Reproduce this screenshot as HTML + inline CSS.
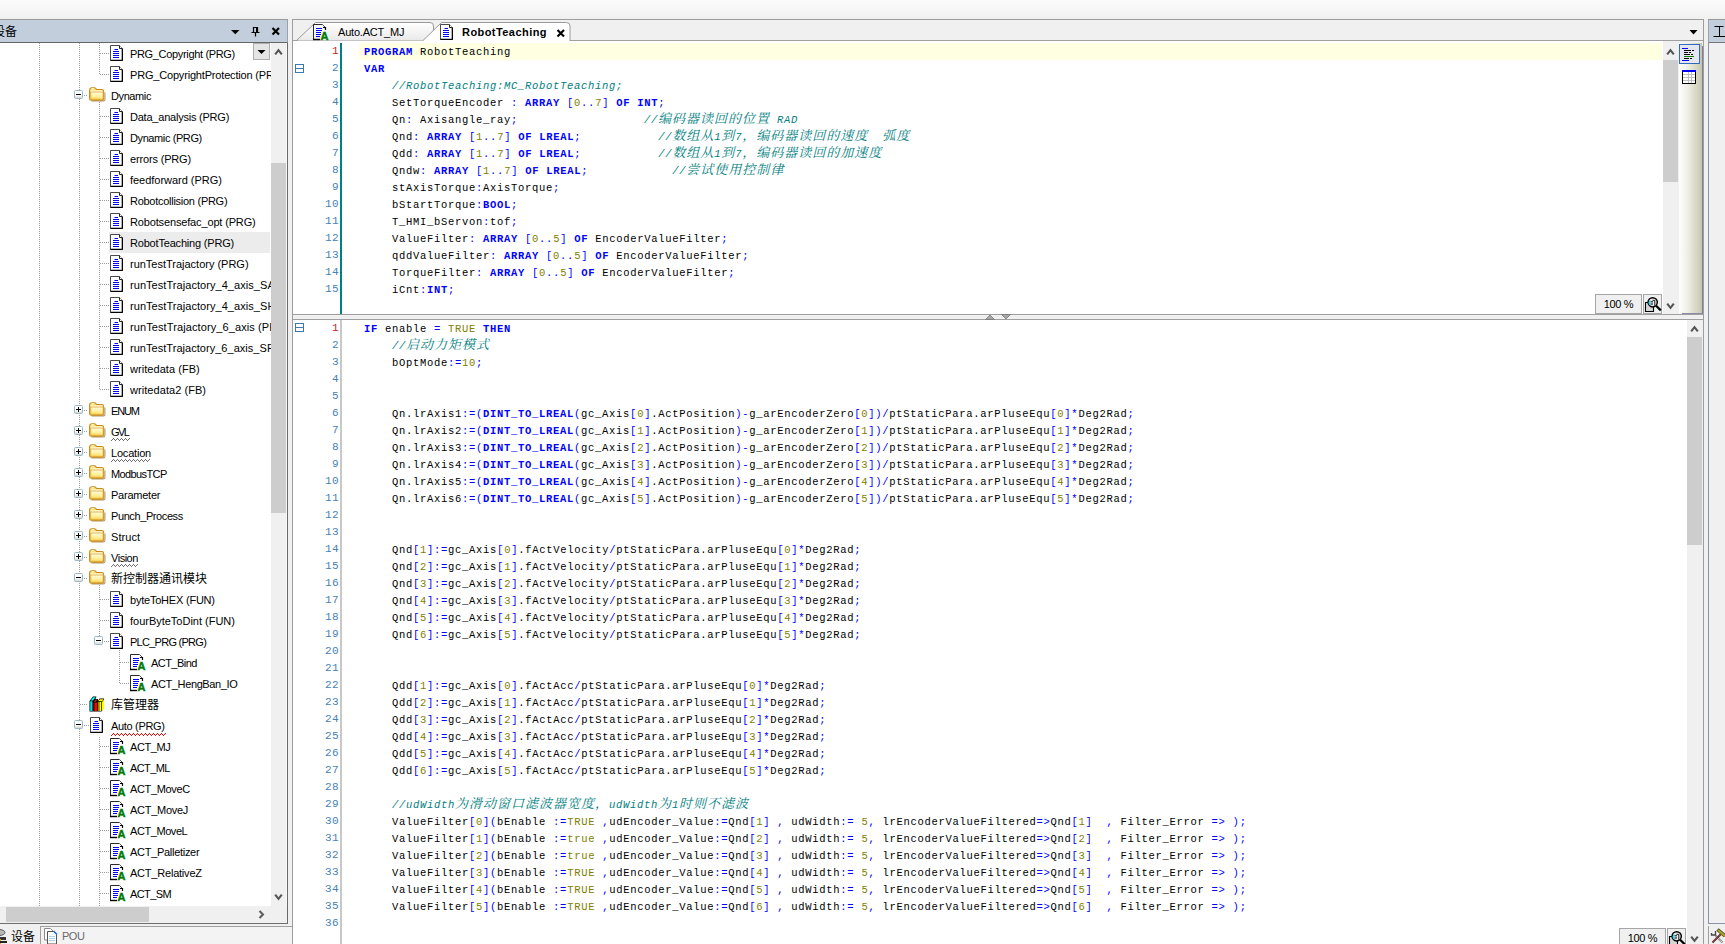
<!DOCTYPE html>
<html lang="zh"><head><meta charset="utf-8"><title>RobotTeaching</title>
<style>
*{box-sizing:border-box;margin:0;padding:0}
html,body{width:1725px;height:944px;overflow:hidden}
body{position:relative;background:#f0f0f0;font-family:"Liberation Sans","Noto Sans CJK SC",sans-serif;font-size:11px;color:#000}
.abs,.ic,.vd,.hd,.sel,.exp,.tl{position:absolute}
.ic{overflow:visible}
.topgrad{left:0;top:0;width:1725px;height:19px;background:linear-gradient(#fbfbfb,#f7f7f7 50%,#f0f0f0)}
.lhead{left:0;top:19px;width:288px;height:24px;background:#c2cedc;border-top:1px solid #999;border-bottom:1px solid #666;border-right:1px solid #9aa3ad}
.tree{left:0;top:43px;width:271px;height:863px;background:#fff;overflow:hidden}
.vd{width:1px;background-image:linear-gradient(#9c9c9c 50%,transparent 50%);background-size:1px 2px}
.hd{height:1px;background-image:linear-gradient(90deg,#9c9c9c 50%,transparent 50%);background-size:2px 1px}
.sel{background:#ececec}
.exp{width:9px;height:9px;border:1px solid #98b9c0;background:linear-gradient(#fff,#fff 55%,#d8d8d8);border-radius:1.5px}
.exp i{position:absolute;left:1px;top:3px;width:5px;height:1px;background:#000}
.exp b{position:absolute;left:3px;top:1px;width:1px;height:5px;background:#000}
.tl{height:21px;line-height:21px;white-space:nowrap;font-size:11px}
.tl.cj{font-size:12px;letter-spacing:0}
/* code */
.code{position:absolute;left:293px;width:1369px;font-family:"Liberation Mono","Noto Sans CJK SC",monospace;font-size:10.5px;letter-spacing:0.699px}
.cl{height:17px;line-height:17px;position:relative}
.ln{position:absolute;left:0;top:-1px;width:46px;text-align:right;font-size:11px;letter-spacing:.4px;color:#4682b4}
.ln.cur{color:#c8242c}
.ct{position:absolute;left:71px;top:0;white-space:pre}
.code b{color:#0000ff;font-weight:bold}
.code .n{color:#808000}
.code .o{color:#0000ff}
.code i{color:#008080;font-style:italic}
.code .z{letter-spacing:1px;font-size:13px;line-height:0;font-family:"Noto Serif CJK SC","Noto Sans CJK SC",serif}
.fb{width:9px;height:9px;border:1px solid #3d7ab5;background:#fff}
.fb:after{content:"";position:absolute;left:0;top:3px;width:7px;height:1px;background:#3d7ab5}
.zb{height:20px;background:#f0f0f0;border:1px solid #a6a6a6}
</style></head><body>

<svg width="0" height="0" style="position:absolute">
<defs>
<linearGradient id="gf" x1="0" y1="0" x2="0" y2="1"><stop offset="0" stop-color="#fffde0"/><stop offset=".55" stop-color="#fff0a0"/><stop offset="1" stop-color="#ffd95a"/></linearGradient>
<linearGradient id="gx" x1="0" y1="0" x2="0" y2="1"><stop offset="0" stop-color="#ffffff"/><stop offset="1" stop-color="#d6d6d6"/></linearGradient>
<symbol id="doc" viewBox="0 0 14 17">
  <path d="M.5 .5h9l3 3v12h-12z" fill="#fff" stroke="#4a4a4a" stroke-width="1"/>
  <path d="M9.500 .5v3h3" fill="#fff" stroke="#222" stroke-width="1"/>
  <path d="M12.350 4v11.500M.5 15.350h12" stroke="#000" stroke-width="1.300" fill="none"/>
  <path d="M4.500 4.500h3.500M3 6.500h6M3 8.500h6M3 10.500h6M3 12.500h6" stroke="#0000ff" stroke-width="1" fill="none"/>
</symbol>
<symbol id="act" viewBox="0 0 16 17">
  <path d="M.5 16V.5h9" fill="none" stroke="#2a2a2a" stroke-width="1"/>
  <path d="M9.500 .5l3 3" fill="none" stroke="#555" stroke-width="1"/>
  <path d="M10 3.500h2.500v2.500" fill="none" stroke="#000" stroke-width="1.200"/>
  <path d="M0 15.500h7" stroke="#000" stroke-width="1.400" fill="none"/>
  <path d="M3 4.500h6M3 6.500h6M3 8.500h5M3 10.500h5M3 12.500h4" stroke="#0000ff" stroke-width="1" fill="none"/>
  <text x="7.400" y="16" font-family="Liberation Sans, sans-serif" font-weight="bold" font-size="11" fill="#007a00" stroke="#007a00" stroke-width=".4">A</text>
</symbol>
<symbol id="fold" viewBox="0 0 17 15">
  <path d="M2.500 13.900h12q1.400 0 1.400-1.400v-7" fill="none" stroke="#7a5410" stroke-width="1.100" opacity=".6"/>
  <path d="M.6 2.900q0-1.900 1.900-2.200h2.700q1.100 0 1.700.9l.6.900h5.400q1.700 0 1.700 1.700v7.200q0 1.700-1.700 1.700h-10.600q-1.700 0-1.700-1.700z" fill="#ffe27a" stroke="#c98a1c" stroke-width="1.100"/>
  <path d="M2 3.400h11.500v2h-11.500z" fill="#fffbe0"/>
  <path d="M1.700 5h12.400v6.400q0 1-1 1h-10.400q-1 0-1-1z" fill="url(#gf)" stroke="#dba336" stroke-width=".8"/>
  <path d="M2.500 1.700h2.600" stroke="#fff8d0" stroke-width="1" fill="none"/>
  <path d="M12.600 6v5.500" stroke="#fff6c0" stroke-width=".8" fill="none"/>
</symbol>
<symbol id="lib" viewBox="0 0 16 16">
  <path d="M.5 5l3.500-4.500h3.500l-1 2.500h2.500v2l1.500-2.500h4.500v9.500l-2.500 3.500h-12z" fill="#000"/>
  <path d="M1.200 5.300h1.800v9.700h-1.800z" fill="#00e5e5"/><path d="M3 5.300h.8v9.700h-.8z" fill="#007a7a"/>
  <path d="M1.600 4.600l2.600-3.400h2.400l-2.600 3.400z" fill="#00ffff"/>
  <path d="M4.400 6.500h1.600v8.500h-1.600z" fill="#a00000"/><path d="M6 6.500h2.200v8.500h-2.200z" fill="#ff0000"/>
  <path d="M5 5.800l1.800-2.300h1.400l-1.600 2.300z" fill="#ff2020"/>
  <path d="M8.900 6h1.600v9h-1.600z" fill="#8a8a00"/><path d="M10.500 6h1.800v9h-1.800z" fill="#ffff00"/>
  <path d="M9.400 5.300l1.500-2.100h3.700l-1.600 2.100z" fill="#ffff00"/>
  <path d="M13 6l2-2.500v8.700l-2 2.700z" fill="#ffff00"/>
</symbol>
<symbol id="mag" viewBox="0 0 18 18">
  <path d="M1.500 7.500h8v9h-8z" fill="#d6d6d6" stroke="#000" stroke-width="1.100"/>
  <circle cx="8.700" cy="7.300" r="4.600" fill="#ededed" stroke="#000" stroke-width="1.500"/>
  <path d="M8.500 5.300h2.300v5.500" stroke="#000" stroke-width=".9" fill="none"/>
  <path d="M6.400 6.800h2.600M6.400 9h2.600" stroke="#000" stroke-width="1"/>
  <path d="M6.200 5.800q-2.200 1.900 0 4" stroke="#00e0ff" stroke-width="1.200" fill="none"/>
  <path d="M12.100 10.700l4.700 4.700" stroke="#000" stroke-width="2.200"/>
</symbol>
<pattern id="pwr" width="4" height="3" patternUnits="userSpaceOnUse"><path d="M0 2h1v1h-1zM1 1h1v1h-1zM2 0h1v1h-1zM3 1h1v1h-1z" fill="#ff0000"/></pattern>
<pattern id="pwg" width="4" height="3" patternUnits="userSpaceOnUse"><path d="M0 2h1v1h-1zM1 1h1v1h-1zM2 0h1v1h-1zM3 1h1v1h-1z" fill="#6e6e6e"/></pattern>
</defs>
</svg>

<div class="abs topgrad"></div>
<div class="abs lhead"></div>
<div class="abs" style="left:-7px;top:23px;font-size:12px;line-height:18px">设备</div>
<svg class="ic" style="left:228px;top:25px" width="56" height="14" viewBox="0 0 56 14"><path d="M3 5h8.500l-4.250 4.250z" fill="#000"/><path d="M25.500 2.500h4v5h-4zM23.500 7.500h8M27.500 8v3.500" stroke="#000" stroke-width="1.200" fill="none"/><path d="M28.700 2.500v5" stroke="#000" stroke-width="1.400"/><path d="M44.500 3l6.500 6.500M51 3l-6.500 6.500" stroke="#000" stroke-width="2.200"/></svg>
<div class="abs tree">
<div style="position:absolute;left:0;top:-43px;width:271px;height:906px">
<div class="vd" style="left:39px;top:43px;height:863px"></div>
<div class="vd" style="left:79px;top:43px;height:863px"></div>
<div class="vd" style="left:99px;top:43px;height:31px"></div>
<div class="vd" style="left:99px;top:102px;height:287px"></div>
<div class="vd" style="left:99px;top:585px;height:51px"></div>
<div class="vd" style="left:119px;top:650px;height:33px"></div>
<div class="vd" style="left:99px;top:737px;height:169px"></div>
<div class="hd" style="left:100px;top:53px;width:9px"></div>
<svg class="ic" style="left:110px;top:45px" width="14" height="17"><use href="#doc"/></svg>
<div class="tl" style="left:130px;top:44px;letter-spacing:-0.335px">PRG_Copyright (PRG)</div>
<div class="hd" style="left:100px;top:74px;width:9px"></div>
<svg class="ic" style="left:110px;top:66px" width="14" height="17"><use href="#doc"/></svg>
<div class="tl" style="left:130px;top:65px;letter-spacing:-0.181px">PRG_CopyrightProtection (PRG)</div>
<div class="hd" style="left:84px;top:95px;width:4px"></div>
<div class="exp" style="left:74px;top:90px"><i></i></div>
<svg class="ic" style="left:89px;top:87px" width="17" height="15"><use href="#fold"/></svg>
<div class="tl" style="left:111px;top:86px;letter-spacing:-0.400px">Dynamic</div>
<div class="hd" style="left:100px;top:116px;width:9px"></div>
<svg class="ic" style="left:110px;top:108px" width="14" height="17"><use href="#doc"/></svg>
<div class="tl" style="left:130px;top:107px;letter-spacing:-0.223px">Data_analysis (PRG)</div>
<div class="hd" style="left:100px;top:137px;width:9px"></div>
<svg class="ic" style="left:110px;top:129px" width="14" height="17"><use href="#doc"/></svg>
<div class="tl" style="left:130px;top:128px;letter-spacing:-0.401px">Dynamic (PRG)</div>
<div class="hd" style="left:100px;top:158px;width:9px"></div>
<svg class="ic" style="left:110px;top:150px" width="14" height="17"><use href="#doc"/></svg>
<div class="tl" style="left:130px;top:149px;letter-spacing:-0.163px">errors (PRG)</div>
<div class="hd" style="left:100px;top:179px;width:9px"></div>
<svg class="ic" style="left:110px;top:171px" width="14" height="17"><use href="#doc"/></svg>
<div class="tl" style="left:130px;top:170px;letter-spacing:-0.030px">feedforward (PRG)</div>
<div class="hd" style="left:100px;top:200px;width:9px"></div>
<svg class="ic" style="left:110px;top:192px" width="14" height="17"><use href="#doc"/></svg>
<div class="tl" style="left:130px;top:191px;letter-spacing:-0.270px">Robotcollision (PRG)</div>
<div class="hd" style="left:100px;top:221px;width:9px"></div>
<svg class="ic" style="left:110px;top:213px" width="14" height="17"><use href="#doc"/></svg>
<div class="tl" style="left:130px;top:212px;letter-spacing:-0.149px">Robotsensefac_opt (PRG)</div>
<div class="sel" style="left:109px;top:232px;width:161px;height:21px"></div>
<div class="hd" style="left:100px;top:242px;width:9px"></div>
<svg class="ic" style="left:110px;top:234px" width="14" height="17"><use href="#doc"/></svg>
<div class="tl" style="left:130px;top:233px;letter-spacing:-0.185px">RobotTeaching (PRG)</div>
<div class="hd" style="left:100px;top:263px;width:9px"></div>
<svg class="ic" style="left:110px;top:255px" width="14" height="17"><use href="#doc"/></svg>
<div class="tl" style="left:130px;top:254px;letter-spacing:-0.009px">runTestTrajactory (PRG)</div>
<div class="hd" style="left:100px;top:284px;width:9px"></div>
<svg class="ic" style="left:110px;top:276px" width="14" height="17"><use href="#doc"/></svg>
<div class="tl" style="left:130px;top:275px;letter-spacing:0.056px">runTestTrajactory_4_axis_SA (PRG)</div>
<div class="hd" style="left:100px;top:305px;width:9px"></div>
<svg class="ic" style="left:110px;top:297px" width="14" height="17"><use href="#doc"/></svg>
<div class="tl" style="left:130px;top:296px;letter-spacing:0.056px">runTestTrajactory_4_axis_SH (PRG)</div>
<div class="hd" style="left:100px;top:326px;width:9px"></div>
<svg class="ic" style="left:110px;top:318px" width="14" height="17"><use href="#doc"/></svg>
<div class="tl" style="left:130px;top:317px;letter-spacing:0.101px">runTestTrajactory_6_axis (PRG)</div>
<div class="hd" style="left:100px;top:347px;width:9px"></div>
<svg class="ic" style="left:110px;top:339px" width="14" height="17"><use href="#doc"/></svg>
<div class="tl" style="left:130px;top:338px;letter-spacing:0.037px">runTestTrajactory_6_axis_SP (PRG)</div>
<div class="hd" style="left:100px;top:368px;width:9px"></div>
<svg class="ic" style="left:110px;top:360px" width="14" height="17"><use href="#doc"/></svg>
<div class="tl" style="left:130px;top:359px;letter-spacing:0.052px">writedata (FB)</div>
<div class="hd" style="left:100px;top:389px;width:9px"></div>
<svg class="ic" style="left:110px;top:381px" width="14" height="17"><use href="#doc"/></svg>
<div class="tl" style="left:130px;top:380px;letter-spacing:0.060px">writedata2 (FB)</div>
<div class="hd" style="left:84px;top:410px;width:4px"></div>
<div class="exp" style="left:74px;top:405px"><i></i><b></b></div>
<svg class="ic" style="left:89px;top:402px" width="17" height="15"><use href="#fold"/></svg>
<div class="tl" style="left:111px;top:401px;letter-spacing:-1.123px">ENUM</div>
<div class="hd" style="left:84px;top:431px;width:4px"></div>
<div class="exp" style="left:74px;top:426px"><i></i><b></b></div>
<svg class="ic" style="left:89px;top:423px" width="17" height="15"><use href="#fold"/></svg>
<div class="tl" style="left:111px;top:422px;letter-spacing:-1.539px">GVL</div>
<svg class="ic" style="left:111px;top:438px" width="19" height="3" shape-rendering="crispEdges"><rect width="19" height="3" fill="url(#pwg)"/></svg>
<div class="hd" style="left:84px;top:452px;width:4px"></div>
<div class="exp" style="left:74px;top:447px"><i></i><b></b></div>
<svg class="ic" style="left:89px;top:444px" width="17" height="15"><use href="#fold"/></svg>
<div class="tl" style="left:111px;top:443px;letter-spacing:-0.199px">Location</div>
<svg class="ic" style="left:111px;top:459px" width="39" height="3" shape-rendering="crispEdges"><rect width="39" height="3" fill="url(#pwg)"/></svg>
<div class="hd" style="left:84px;top:473px;width:4px"></div>
<div class="exp" style="left:74px;top:468px"><i></i><b></b></div>
<svg class="ic" style="left:89px;top:465px" width="17" height="15"><use href="#fold"/></svg>
<div class="tl" style="left:111px;top:464px;letter-spacing:-0.605px">ModbusTCP</div>
<div class="hd" style="left:84px;top:494px;width:4px"></div>
<div class="exp" style="left:74px;top:489px"><i></i><b></b></div>
<svg class="ic" style="left:89px;top:486px" width="17" height="15"><use href="#fold"/></svg>
<div class="tl" style="left:111px;top:485px;letter-spacing:-0.240px">Parameter</div>
<div class="hd" style="left:84px;top:515px;width:4px"></div>
<div class="exp" style="left:74px;top:510px"><i></i><b></b></div>
<svg class="ic" style="left:89px;top:507px" width="17" height="15"><use href="#fold"/></svg>
<div class="tl" style="left:111px;top:506px;letter-spacing:-0.404px">Punch_Process</div>
<div class="hd" style="left:84px;top:536px;width:4px"></div>
<div class="exp" style="left:74px;top:531px"><i></i><b></b></div>
<svg class="ic" style="left:89px;top:528px" width="17" height="15"><use href="#fold"/></svg>
<div class="tl" style="left:111px;top:527px;letter-spacing:0.078px">Struct</div>
<div class="hd" style="left:84px;top:557px;width:4px"></div>
<div class="exp" style="left:74px;top:552px"><i></i><b></b></div>
<svg class="ic" style="left:89px;top:549px" width="17" height="15"><use href="#fold"/></svg>
<div class="tl" style="left:111px;top:548px;letter-spacing:-0.478px">Vision</div>
<svg class="ic" style="left:111px;top:564px" width="27" height="3" shape-rendering="crispEdges"><rect width="27" height="3" fill="url(#pwg)"/></svg>
<div class="hd" style="left:84px;top:578px;width:4px"></div>
<div class="exp" style="left:74px;top:573px"><i></i></div>
<svg class="ic" style="left:89px;top:570px" width="17" height="15"><use href="#fold"/></svg>
<div class="tl cj" style="left:111px;top:569px">新控制器通讯模块</div>
<div class="hd" style="left:100px;top:599px;width:9px"></div>
<svg class="ic" style="left:110px;top:591px" width="14" height="17"><use href="#doc"/></svg>
<div class="tl" style="left:130px;top:590px;letter-spacing:-0.215px">byteToHEX (FUN)</div>
<div class="hd" style="left:100px;top:620px;width:9px"></div>
<svg class="ic" style="left:110px;top:612px" width="14" height="17"><use href="#doc"/></svg>
<div class="tl" style="left:130px;top:611px;letter-spacing:-0.012px">fourByteToDint (FUN)</div>
<div class="hd" style="left:104px;top:641px;width:5px"></div>
<div class="exp" style="left:94px;top:636px"><i></i></div>
<svg class="ic" style="left:110px;top:633px" width="14" height="17"><use href="#doc"/></svg>
<div class="tl" style="left:130px;top:632px;letter-spacing:-0.729px">PLC_PRG (PRG)</div>
<div class="hd" style="left:120px;top:662px;width:9px"></div>
<svg class="ic" style="left:130px;top:654px" width="16" height="17"><use href="#act"/></svg>
<div class="tl" style="left:151px;top:653px;letter-spacing:-0.543px">ACT_Bind</div>
<div class="hd" style="left:120px;top:683px;width:9px"></div>
<svg class="ic" style="left:130px;top:675px" width="16" height="17"><use href="#act"/></svg>
<div class="tl" style="left:151px;top:674px;letter-spacing:-0.380px">ACT_HengBan_IO</div>
<div class="hd" style="left:80px;top:704px;width:8px"></div>
<svg class="ic" style="left:89px;top:696px" width="16" height="16"><use href="#lib"/></svg>
<div class="tl cj" style="left:111px;top:695px">库管理器</div>
<div class="hd" style="left:84px;top:725px;width:5px"></div>
<div class="exp" style="left:74px;top:720px"><i></i></div>
<svg class="ic" style="left:90px;top:717px" width="14" height="17"><use href="#doc"/></svg>
<div class="tl" style="left:111px;top:716px;letter-spacing:-0.316px">Auto (PRG)</div>
<svg class="ic" style="left:111px;top:733px" width="55" height="3" shape-rendering="crispEdges"><rect width="55" height="3" fill="url(#pwr)"/></svg>
<div class="hd" style="left:100px;top:746px;width:9px"></div>
<svg class="ic" style="left:110px;top:738px" width="16" height="17"><use href="#act"/></svg>
<div class="tl" style="left:130px;top:737px;letter-spacing:-0.430px">ACT_MJ</div>
<div class="hd" style="left:100px;top:767px;width:9px"></div>
<svg class="ic" style="left:110px;top:759px" width="16" height="17"><use href="#act"/></svg>
<div class="tl" style="left:130px;top:758px;letter-spacing:-0.618px">ACT_ML</div>
<div class="hd" style="left:100px;top:788px;width:9px"></div>
<svg class="ic" style="left:110px;top:780px" width="16" height="17"><use href="#act"/></svg>
<div class="tl" style="left:130px;top:779px;letter-spacing:-0.352px">ACT_MoveC</div>
<div class="hd" style="left:100px;top:809px;width:9px"></div>
<svg class="ic" style="left:110px;top:801px" width="16" height="17"><use href="#act"/></svg>
<div class="tl" style="left:130px;top:800px;letter-spacing:-0.281px">ACT_MoveJ</div>
<div class="hd" style="left:100px;top:830px;width:9px"></div>
<svg class="ic" style="left:110px;top:822px" width="16" height="17"><use href="#act"/></svg>
<div class="tl" style="left:130px;top:821px;letter-spacing:-0.427px">ACT_MoveL</div>
<div class="hd" style="left:100px;top:851px;width:9px"></div>
<svg class="ic" style="left:110px;top:843px" width="16" height="17"><use href="#act"/></svg>
<div class="tl" style="left:130px;top:842px;letter-spacing:-0.290px">ACT_Palletizer</div>
<div class="hd" style="left:100px;top:872px;width:9px"></div>
<svg class="ic" style="left:110px;top:864px" width="16" height="17"><use href="#act"/></svg>
<div class="tl" style="left:130px;top:863px;letter-spacing:-0.214px">ACT_RelativeZ</div>
<div class="hd" style="left:100px;top:893px;width:9px"></div>
<svg class="ic" style="left:110px;top:885px" width="16" height="17"><use href="#act"/></svg>
<div class="tl" style="left:130px;top:884px;letter-spacing:-0.604px">ACT_SM</div>
</div></div>
<div class="abs" style="left:253px;top:43px;width:17px;height:17px;background:#e5e5e5;border:1px solid #adadad"></div>
<svg class="ic" style="left:257px;top:50px" width="9" height="5"><path d="M.5 0h8L4.500 4z" fill="#000"/></svg>
<div class="abs" style="left:271px;top:43px;width:16px;height:863px;background:#f0f0f0;border-right:1px solid #f8f8f8"></div>
<div class="abs" style="left:271px;top:163px;width:15px;height:350px;background:#cdcdcd"></div>
<svg class="ic" style="left:274px;top:48px" width="9" height="7"><path d="M1.200 6.400l3.300-4.200 3.300 4.200" stroke="#555" stroke-width="2.100" fill="none"/></svg>
<svg class="ic" style="left:274px;top:894px" width="9" height="7"><path d="M1.200 .6l3.300 4.200 3.300-4.200" stroke="#555" stroke-width="2.100" fill="none"/></svg>
<div class="abs" style="left:0;top:906px;width:287px;height:17px;background:#f0f0f0"></div>
<div class="abs" style="left:6px;top:907px;width:143px;height:15px;background:#cdcdcd"></div>
<svg class="ic" style="left:258px;top:910px" width="7" height="9"><path d="M1.500 1l3.500 3.500L1.500 8" stroke="#5a5a5a" stroke-width="2" fill="none"/></svg>
<div class="abs" style="left:287px;top:43px;width:1px;height:881px;background:#6a6a6a"></div>
<div class="abs" style="left:0;top:923px;width:288px;height:1px;background:#6e6e6e"></div>
<div class="abs" style="left:40px;top:926px;width:252px;height:18px;background:#f3f3f3;border-left:1px solid #a0a0a0;border-top:1px solid #a0a0a0"></div>
<svg class="ic" style="left:-7px;top:928px" width="14" height="16" viewBox="0 0 14 16"><ellipse cx="6" cy="4.500" rx="6" ry="3" fill="#b8b8b8" stroke="#555"/><path d="M2 9h11v3h-11z" fill="#333"/><path d="M4 11h4v5h-4z" fill="#e0a020"/><path d="M6 13h8v2h-8z" fill="#222"/></svg>
<div class="abs" style="left:11px;top:928px;font-size:12px;line-height:18px">设备</div>
<div class="abs" style="left:62px;top:927px;font-size:11px;line-height:18px;color:#6a6a6a;letter-spacing:-.5px">POU</div>
<svg class="ic" style="left:44px;top:928px" width="14" height="16" viewBox="0 0 14 16"><path d="M.5 .5h6l2.500 2.500v9h-8.500z" fill="#fff" stroke="#8a8a8a"/><path d="M3.500 3.500h6l3 3v9.500h-9z" fill="#fff" stroke="#555"/><path d="M9.500 3l3.500 3.500" stroke="#1f6fd0" stroke-width="1.600"/><path d="M5 8.500h6M5 10.500h6M5 12.500h6" stroke="#a8d4f0"/></svg>
<div class="abs" style="left:292px;top:19px;width:1412px;height:925px;border:1px solid #9d9d9d;border-bottom:0;background:#f0f0f0"></div>
<div class="abs" style="left:293px;top:40px;width:1410px;height:1px;background:#a0a0a0"></div>
<svg class="ic" style="left:293px;top:20px" width="300" height="21" viewBox="0 0 300 21"><defs><linearGradient id="tg" x1="0" y1="0" x2="0" y2="1"><stop offset="0" stop-color="#fff"/><stop offset="1" stop-color="#e9e9e9"/></linearGradient></defs><path d="M4.500 20.500L22.500 3h115q3 0 3 3v14.500z" fill="url(#tg)" stroke="none"/><path d="M3.500 20.500L22.500 2.500h114.500q3.500 0 3.500 3.500v6" fill="none" stroke="#9a9a9a"/><path d="M130 21L148.500 2.500h125q3.500 0 3.500 3.500v15z" fill="#fff" stroke="none"/><path d="M130 20.500L148.500 2.500h125q3.500 0 3.500 3.500v15" fill="none" stroke="#9a9a9a"/><path d="M264.500 10l6.500 6.500M271 10l-6.500 6.500" stroke="#000" stroke-width="2.100"/></svg>
<svg class="ic" style="left:313px;top:24px" width="16" height="17"><use href="#act"/></svg>
<svg class="ic" style="left:440px;top:24px" width="14" height="17"><use href="#doc"/></svg>
<div class="abs" style="left:338px;top:23px;font-size:11px;line-height:18px;letter-spacing:-.2px">Auto.ACT_MJ</div>
<div class="abs" style="left:462px;top:23px;font-size:11px;line-height:18px;font-weight:bold;letter-spacing:.44px">RobotTeaching</div>
<svg class="ic" style="left:1689px;top:30px" width="9" height="5"><path d="M.5 0h8L4.500 4.500z" fill="#000"/></svg>
<div class="abs" style="left:293px;top:41px;width:1370px;height:273px;background:#fff"></div>
<div class="abs" style="left:359px;top:43px;width:1303px;height:17px;background:#ffffe1"></div>
<div class="abs" style="left:340px;top:43px;width:2px;height:271px;background:#008080"></div>
<div class="code dc" style="top:44px">
<div class="cl"><span class="ln cur">1</span><span class="ct"><b>PROGRAM</b> RobotTeaching</span></div>
<div class="cl"><span class="ln">2</span><span class="ct"><b>VAR</b></span></div>
<div class="cl"><span class="ln">3</span><span class="ct">    <i>//RobotTeaching:MC_RobotTeaching;</i></span></div>
<div class="cl"><span class="ln">4</span><span class="ct">    SetTorqueEncoder <span class="o">:</span> <b>ARRAY</b> <span class="o">[</span><span class="n">0</span><span class="o">..</span><span class="n">7</span><span class="o">]</span> <b>OF</b> <b>INT</b><span class="o">;</span></span></div>
<div class="cl"><span class="ln">5</span><span class="ct">    Qn<span class="o">:</span> Axisangle_ray<span class="o">;</span>                  <i>//<span class="z">编码器读回的位置</span> RAD</i></span></div>
<div class="cl"><span class="ln">6</span><span class="ct">    Qnd<span class="o">:</span> <b>ARRAY</b> <span class="o">[</span><span class="n">1</span><span class="o">..</span><span class="n">7</span><span class="o">]</span> <b>OF</b> <b>LREAL</b><span class="o">;</span>           <i>//<span class="z">数组从</span>1<span class="z">到</span>7<span class="z">，编码器读回的速度</span>  <span class="z">弧度</span></i></span></div>
<div class="cl"><span class="ln">7</span><span class="ct">    Qdd<span class="o">:</span> <b>ARRAY</b> <span class="o">[</span><span class="n">1</span><span class="o">..</span><span class="n">7</span><span class="o">]</span> <b>OF</b> <b>LREAL</b><span class="o">;</span>           <i>//<span class="z">数组从</span>1<span class="z">到</span>7<span class="z">，编码器读回的加速度</span></i></span></div>
<div class="cl"><span class="ln">8</span><span class="ct">    Qndw<span class="o">:</span> <b>ARRAY</b> <span class="o">[</span><span class="n">1</span><span class="o">..</span><span class="n">7</span><span class="o">]</span> <b>OF</b> <b>LREAL</b><span class="o">;</span>            <i>//<span class="z">尝试使用控制律</span></i></span></div>
<div class="cl"><span class="ln">9</span><span class="ct">    stAxisTorque<span class="o">:</span>AxisTorque<span class="o">;</span></span></div>
<div class="cl"><span class="ln">10</span><span class="ct">    bStartTorque<span class="o">:</span><b>BOOL</b><span class="o">;</span></span></div>
<div class="cl"><span class="ln">11</span><span class="ct">    T_HMI_bServon<span class="o">:</span>tof<span class="o">;</span></span></div>
<div class="cl"><span class="ln">12</span><span class="ct">    ValueFilter<span class="o">:</span> <b>ARRAY</b> <span class="o">[</span><span class="n">0</span><span class="o">..</span><span class="n">5</span><span class="o">]</span> <b>OF</b> EncoderValueFilter<span class="o">;</span></span></div>
<div class="cl"><span class="ln">13</span><span class="ct">    qddValueFilter<span class="o">:</span> <b>ARRAY</b> <span class="o">[</span><span class="n">0</span><span class="o">..</span><span class="n">5</span><span class="o">]</span> <b>OF</b> EncoderValueFilter<span class="o">;</span></span></div>
<div class="cl"><span class="ln">14</span><span class="ct">    TorqueFilter<span class="o">:</span> <b>ARRAY</b> <span class="o">[</span><span class="n">0</span><span class="o">..</span><span class="n">5</span><span class="o">]</span> <b>OF</b> EncoderValueFilter<span class="o">;</span></span></div>
<div class="cl"><span class="ln">15</span><span class="ct">    iCnt<span class="o">:</span><b>INT</b><span class="o">;</span></span></div>
</div>
<div class="abs fb" style="left:295px;top:64px"></div>
<div class="abs" style="left:1663px;top:41px;width:16px;height:273px;background:#f0f0f0"></div>
<div class="abs" style="left:1663px;top:60px;width:15px;height:122px;background:#cdcdcd"></div>
<svg class="ic" style="left:1666px;top:48px" width="9" height="7"><path d="M1.200 6.400l3.300-4.200 3.300 4.200" stroke="#555" stroke-width="2.100" fill="none"/></svg>
<svg class="ic" style="left:1666px;top:303px" width="9" height="7"><path d="M1.200 .6l3.300 4.200 3.300-4.200" stroke="#555" stroke-width="2.100" fill="none"/></svg>
<div class="abs" style="left:1679px;top:43px;width:23px;height:271px;background:linear-gradient(90deg,#fefefc,#f0f0e8 35%,#d4d4c0 80%,#c4c4b0)"></div>
<div class="abs" style="left:1702px;top:46px;width:1px;height:268px;background:#7f7f9b"></div>
<div class="abs" style="left:1682px;top:313px;width:21px;height:1px;background:#8a8aa8"></div>
<div class="abs" style="left:1679px;top:44px;width:21px;height:20px;background:#e6e6f0;border:1px solid #316ac5"></div>
<svg class="ic" style="left:1682px;top:47px" width="14" height="15" viewBox="0 0 14 15" fill="none" stroke-width="1"><path d="M0 1.500h6" stroke="#0000ff"/><path d="M2 3.500h7M10 3.500h2M2 5.500h4M7 5.500h2M2 7.500h6M9 7.500h2M2 11.500h5M8 11.500h2" stroke="#000"/><path d="M2 9.500h10" stroke="#008000"/><path d="M0 13.500h7" stroke="#0000ff"/></svg>
<svg class="ic" style="left:1682px;top:70px" width="14" height="14" viewBox="0 0 14 14" fill="none"><rect x=".5" y=".5" width="13" height="13" fill="#fff" stroke="#000"/><path d="M0 1h14" stroke="#0000ff" stroke-width="2"/><path d="M1 4.500h12M1 7.500h12M1 10.500h12M6.500 2v11M9.500 2v11" stroke="#c0c0c0"/><path d="M0 13.500h14" stroke="#000" stroke-width="1"/></svg>
<div class="abs zb" style="left:1595px;top:294px;width:47px;font-size:11px;line-height:18px;text-align:center;letter-spacing:-.3px">100 %</div><div class="abs zb" style="left:1643px;top:294px;width:19px"></div><svg class="ic" style="left:1644px;top:295px" width="18" height="18"><use href="#mag"/></svg>
<div class="abs" style="left:293px;top:314px;width:1410px;height:6px;background:#f0f0f0;border-top:1px solid #a0a0a0;border-bottom:1px solid #a0a0a0"></div>
<svg class="ic" style="left:984px;top:314px" width="30" height="7" viewBox="0 0 30 7"><path d="M1.500 5.500l4.500-4.500L10.500 5.500z" fill="#a8a8a8" stroke="#777" stroke-width=".8"/><path d="M17.500 .5l4.500 4.500L26.500 .5z" fill="#a8a8a8" stroke="#777" stroke-width=".8"/></svg>
<div class="abs" style="left:293px;top:320px;width:1394px;height:624px;background:#fff"></div>
<div class="abs" style="left:340px;top:320px;width:2px;height:624px;background:#c8c8c8"></div>
<div class="code im" style="top:321px">
<div class="cl"><span class="ln cur">1</span><span class="ct"><b>IF</b> enable <span class="o">=</span> <span class="n">TRUE</span> <b>THEN</b></span></div>
<div class="cl"><span class="ln">2</span><span class="ct">    <i>//<span class="z">启动力矩模式</span></i></span></div>
<div class="cl"><span class="ln">3</span><span class="ct">    bOptMode<span class="o">:</span><span class="o">=</span><span class="n">10</span><span class="o">;</span></span></div>
<div class="cl"><span class="ln">4</span><span class="ct"></span></div>
<div class="cl"><span class="ln">5</span><span class="ct"></span></div>
<div class="cl"><span class="ln">6</span><span class="ct">    Qn.lrAxis1<span class="o">:</span><span class="o">=</span><span class="o">(</span><b>DINT_TO_LREAL</b><span class="o">(</span>gc_Axis<span class="o">[</span><span class="n">0</span><span class="o">]</span>.ActPosition<span class="o">)</span><span class="o">-</span>g_arEncoderZero<span class="o">[</span><span class="n">0</span><span class="o">]</span><span class="o">)</span><span class="o">/</span>ptStaticPara.arPluseEqu<span class="o">[</span><span class="n">0</span><span class="o">]</span><span class="o">*</span>Deg2Rad<span class="o">;</span></span></div>
<div class="cl"><span class="ln">7</span><span class="ct">    Qn.lrAxis2<span class="o">:</span><span class="o">=</span><span class="o">(</span><b>DINT_TO_LREAL</b><span class="o">(</span>gc_Axis<span class="o">[</span><span class="n">1</span><span class="o">]</span>.ActPosition<span class="o">)</span><span class="o">-</span>g_arEncoderZero<span class="o">[</span><span class="n">1</span><span class="o">]</span><span class="o">)</span><span class="o">/</span>ptStaticPara.arPluseEqu<span class="o">[</span><span class="n">1</span><span class="o">]</span><span class="o">*</span>Deg2Rad<span class="o">;</span></span></div>
<div class="cl"><span class="ln">8</span><span class="ct">    Qn.lrAxis3<span class="o">:</span><span class="o">=</span><span class="o">(</span><b>DINT_TO_LREAL</b><span class="o">(</span>gc_Axis<span class="o">[</span><span class="n">2</span><span class="o">]</span>.ActPosition<span class="o">)</span><span class="o">-</span>g_arEncoderZero<span class="o">[</span><span class="n">2</span><span class="o">]</span><span class="o">)</span><span class="o">/</span>ptStaticPara.arPluseEqu<span class="o">[</span><span class="n">2</span><span class="o">]</span><span class="o">*</span>Deg2Rad<span class="o">;</span></span></div>
<div class="cl"><span class="ln">9</span><span class="ct">    Qn.lrAxis4<span class="o">:</span><span class="o">=</span><span class="o">(</span><b>DINT_TO_LREAL</b><span class="o">(</span>gc_Axis<span class="o">[</span><span class="n">3</span><span class="o">]</span>.ActPosition<span class="o">)</span><span class="o">-</span>g_arEncoderZero<span class="o">[</span><span class="n">3</span><span class="o">]</span><span class="o">)</span><span class="o">/</span>ptStaticPara.arPluseEqu<span class="o">[</span><span class="n">3</span><span class="o">]</span><span class="o">*</span>Deg2Rad<span class="o">;</span></span></div>
<div class="cl"><span class="ln">10</span><span class="ct">    Qn.lrAxis5<span class="o">:</span><span class="o">=</span><span class="o">(</span><b>DINT_TO_LREAL</b><span class="o">(</span>gc_Axis<span class="o">[</span><span class="n">4</span><span class="o">]</span>.ActPosition<span class="o">)</span><span class="o">-</span>g_arEncoderZero<span class="o">[</span><span class="n">4</span><span class="o">]</span><span class="o">)</span><span class="o">/</span>ptStaticPara.arPluseEqu<span class="o">[</span><span class="n">4</span><span class="o">]</span><span class="o">*</span>Deg2Rad<span class="o">;</span></span></div>
<div class="cl"><span class="ln">11</span><span class="ct">    Qn.lrAxis6<span class="o">:</span><span class="o">=</span><span class="o">(</span><b>DINT_TO_LREAL</b><span class="o">(</span>gc_Axis<span class="o">[</span><span class="n">5</span><span class="o">]</span>.ActPosition<span class="o">)</span><span class="o">-</span>g_arEncoderZero<span class="o">[</span><span class="n">5</span><span class="o">]</span><span class="o">)</span><span class="o">/</span>ptStaticPara.arPluseEqu<span class="o">[</span><span class="n">5</span><span class="o">]</span><span class="o">*</span>Deg2Rad<span class="o">;</span></span></div>
<div class="cl"><span class="ln">12</span><span class="ct"></span></div>
<div class="cl"><span class="ln">13</span><span class="ct"></span></div>
<div class="cl"><span class="ln">14</span><span class="ct">    Qnd<span class="o">[</span><span class="n">1</span><span class="o">]</span><span class="o">:</span><span class="o">=</span>gc_Axis<span class="o">[</span><span class="n">0</span><span class="o">]</span>.fActVelocity<span class="o">/</span>ptStaticPara.arPluseEqu<span class="o">[</span><span class="n">0</span><span class="o">]</span><span class="o">*</span>Deg2Rad<span class="o">;</span></span></div>
<div class="cl"><span class="ln">15</span><span class="ct">    Qnd<span class="o">[</span><span class="n">2</span><span class="o">]</span><span class="o">:</span><span class="o">=</span>gc_Axis<span class="o">[</span><span class="n">1</span><span class="o">]</span>.fActVelocity<span class="o">/</span>ptStaticPara.arPluseEqu<span class="o">[</span><span class="n">1</span><span class="o">]</span><span class="o">*</span>Deg2Rad<span class="o">;</span></span></div>
<div class="cl"><span class="ln">16</span><span class="ct">    Qnd<span class="o">[</span><span class="n">3</span><span class="o">]</span><span class="o">:</span><span class="o">=</span>gc_Axis<span class="o">[</span><span class="n">2</span><span class="o">]</span>.fActVelocity<span class="o">/</span>ptStaticPara.arPluseEqu<span class="o">[</span><span class="n">2</span><span class="o">]</span><span class="o">*</span>Deg2Rad<span class="o">;</span></span></div>
<div class="cl"><span class="ln">17</span><span class="ct">    Qnd<span class="o">[</span><span class="n">4</span><span class="o">]</span><span class="o">:</span><span class="o">=</span>gc_Axis<span class="o">[</span><span class="n">3</span><span class="o">]</span>.fActVelocity<span class="o">/</span>ptStaticPara.arPluseEqu<span class="o">[</span><span class="n">3</span><span class="o">]</span><span class="o">*</span>Deg2Rad<span class="o">;</span></span></div>
<div class="cl"><span class="ln">18</span><span class="ct">    Qnd<span class="o">[</span><span class="n">5</span><span class="o">]</span><span class="o">:</span><span class="o">=</span>gc_Axis<span class="o">[</span><span class="n">4</span><span class="o">]</span>.fActVelocity<span class="o">/</span>ptStaticPara.arPluseEqu<span class="o">[</span><span class="n">4</span><span class="o">]</span><span class="o">*</span>Deg2Rad<span class="o">;</span></span></div>
<div class="cl"><span class="ln">19</span><span class="ct">    Qnd<span class="o">[</span><span class="n">6</span><span class="o">]</span><span class="o">:</span><span class="o">=</span>gc_Axis<span class="o">[</span><span class="n">5</span><span class="o">]</span>.fActVelocity<span class="o">/</span>ptStaticPara.arPluseEqu<span class="o">[</span><span class="n">5</span><span class="o">]</span><span class="o">*</span>Deg2Rad<span class="o">;</span></span></div>
<div class="cl"><span class="ln">20</span><span class="ct"></span></div>
<div class="cl"><span class="ln">21</span><span class="ct"></span></div>
<div class="cl"><span class="ln">22</span><span class="ct">    Qdd<span class="o">[</span><span class="n">1</span><span class="o">]</span><span class="o">:</span><span class="o">=</span>gc_Axis<span class="o">[</span><span class="n">0</span><span class="o">]</span>.fActAcc<span class="o">/</span>ptStaticPara.arPluseEqu<span class="o">[</span><span class="n">0</span><span class="o">]</span><span class="o">*</span>Deg2Rad<span class="o">;</span></span></div>
<div class="cl"><span class="ln">23</span><span class="ct">    Qdd<span class="o">[</span><span class="n">2</span><span class="o">]</span><span class="o">:</span><span class="o">=</span>gc_Axis<span class="o">[</span><span class="n">1</span><span class="o">]</span>.fActAcc<span class="o">/</span>ptStaticPara.arPluseEqu<span class="o">[</span><span class="n">1</span><span class="o">]</span><span class="o">*</span>Deg2Rad<span class="o">;</span></span></div>
<div class="cl"><span class="ln">24</span><span class="ct">    Qdd<span class="o">[</span><span class="n">3</span><span class="o">]</span><span class="o">:</span><span class="o">=</span>gc_Axis<span class="o">[</span><span class="n">2</span><span class="o">]</span>.fActAcc<span class="o">/</span>ptStaticPara.arPluseEqu<span class="o">[</span><span class="n">2</span><span class="o">]</span><span class="o">*</span>Deg2Rad<span class="o">;</span></span></div>
<div class="cl"><span class="ln">25</span><span class="ct">    Qdd<span class="o">[</span><span class="n">4</span><span class="o">]</span><span class="o">:</span><span class="o">=</span>gc_Axis<span class="o">[</span><span class="n">3</span><span class="o">]</span>.fActAcc<span class="o">/</span>ptStaticPara.arPluseEqu<span class="o">[</span><span class="n">3</span><span class="o">]</span><span class="o">*</span>Deg2Rad<span class="o">;</span></span></div>
<div class="cl"><span class="ln">26</span><span class="ct">    Qdd<span class="o">[</span><span class="n">5</span><span class="o">]</span><span class="o">:</span><span class="o">=</span>gc_Axis<span class="o">[</span><span class="n">4</span><span class="o">]</span>.fActAcc<span class="o">/</span>ptStaticPara.arPluseEqu<span class="o">[</span><span class="n">4</span><span class="o">]</span><span class="o">*</span>Deg2Rad<span class="o">;</span></span></div>
<div class="cl"><span class="ln">27</span><span class="ct">    Qdd<span class="o">[</span><span class="n">6</span><span class="o">]</span><span class="o">:</span><span class="o">=</span>gc_Axis<span class="o">[</span><span class="n">5</span><span class="o">]</span>.fActAcc<span class="o">/</span>ptStaticPara.arPluseEqu<span class="o">[</span><span class="n">5</span><span class="o">]</span><span class="o">*</span>Deg2Rad<span class="o">;</span></span></div>
<div class="cl"><span class="ln">28</span><span class="ct"></span></div>
<div class="cl"><span class="ln">29</span><span class="ct">    <i>//udWidth<span class="z">为滑动窗口滤波器宽度，</span>udWidth<span class="z">为</span>1<span class="z">时则不滤波</span></i></span></div>
<div class="cl"><span class="ln">30</span><span class="ct">    ValueFilter<span class="o">[</span><span class="n">0</span><span class="o">]</span><span class="o">(</span>bEnable <span class="o">:</span><span class="o">=</span><span class="n">TRUE</span> <span class="o">,</span>udEncoder_Value<span class="o">:</span><span class="o">=</span>Qnd<span class="o">[</span><span class="n">1</span><span class="o">]</span> <span class="o">,</span> udWidth<span class="o">:</span><span class="o">=</span> <span class="n">5</span><span class="o">,</span> lrEncoderValueFiltered<span class="o">=</span><span class="o">&gt;</span>Qnd<span class="o">[</span><span class="n">1</span><span class="o">]</span>  <span class="o">,</span> Filter_Error <span class="o">=</span><span class="o">&gt;</span> <span class="o">)</span><span class="o">;</span></span></div>
<div class="cl"><span class="ln">31</span><span class="ct">    ValueFilter<span class="o">[</span><span class="n">1</span><span class="o">]</span><span class="o">(</span>bEnable <span class="o">:</span><span class="o">=</span><span class="n">true</span> <span class="o">,</span>udEncoder_Value<span class="o">:</span><span class="o">=</span>Qnd<span class="o">[</span><span class="n">2</span><span class="o">]</span> <span class="o">,</span> udWidth<span class="o">:</span><span class="o">=</span> <span class="n">5</span><span class="o">,</span> lrEncoderValueFiltered<span class="o">=</span><span class="o">&gt;</span>Qnd<span class="o">[</span><span class="n">2</span><span class="o">]</span>  <span class="o">,</span> Filter_Error <span class="o">=</span><span class="o">&gt;</span> <span class="o">)</span><span class="o">;</span></span></div>
<div class="cl"><span class="ln">32</span><span class="ct">    ValueFilter<span class="o">[</span><span class="n">2</span><span class="o">]</span><span class="o">(</span>bEnable <span class="o">:</span><span class="o">=</span><span class="n">true</span> <span class="o">,</span>udEncoder_Value<span class="o">:</span><span class="o">=</span>Qnd<span class="o">[</span><span class="n">3</span><span class="o">]</span> <span class="o">,</span> udWidth<span class="o">:</span><span class="o">=</span> <span class="n">5</span><span class="o">,</span> lrEncoderValueFiltered<span class="o">=</span><span class="o">&gt;</span>Qnd<span class="o">[</span><span class="n">3</span><span class="o">]</span>  <span class="o">,</span> Filter_Error <span class="o">=</span><span class="o">&gt;</span> <span class="o">)</span><span class="o">;</span></span></div>
<div class="cl"><span class="ln">33</span><span class="ct">    ValueFilter<span class="o">[</span><span class="n">3</span><span class="o">]</span><span class="o">(</span>bEnable <span class="o">:</span><span class="o">=</span><span class="n">TRUE</span> <span class="o">,</span>udEncoder_Value<span class="o">:</span><span class="o">=</span>Qnd<span class="o">[</span><span class="n">4</span><span class="o">]</span> <span class="o">,</span> udWidth<span class="o">:</span><span class="o">=</span> <span class="n">5</span><span class="o">,</span> lrEncoderValueFiltered<span class="o">=</span><span class="o">&gt;</span>Qnd<span class="o">[</span><span class="n">4</span><span class="o">]</span>  <span class="o">,</span> Filter_Error <span class="o">=</span><span class="o">&gt;</span> <span class="o">)</span><span class="o">;</span></span></div>
<div class="cl"><span class="ln">34</span><span class="ct">    ValueFilter<span class="o">[</span><span class="n">4</span><span class="o">]</span><span class="o">(</span>bEnable <span class="o">:</span><span class="o">=</span><span class="n">TRUE</span> <span class="o">,</span>udEncoder_Value<span class="o">:</span><span class="o">=</span>Qnd<span class="o">[</span><span class="n">5</span><span class="o">]</span> <span class="o">,</span> udWidth<span class="o">:</span><span class="o">=</span> <span class="n">5</span><span class="o">,</span> lrEncoderValueFiltered<span class="o">=</span><span class="o">&gt;</span>Qnd<span class="o">[</span><span class="n">5</span><span class="o">]</span>  <span class="o">,</span> Filter_Error <span class="o">=</span><span class="o">&gt;</span> <span class="o">)</span><span class="o">;</span></span></div>
<div class="cl"><span class="ln">35</span><span class="ct">    ValueFilter<span class="o">[</span><span class="n">5</span><span class="o">]</span><span class="o">(</span>bEnable <span class="o">:</span><span class="o">=</span><span class="n">TRUE</span> <span class="o">,</span>udEncoder_Value<span class="o">:</span><span class="o">=</span>Qnd<span class="o">[</span><span class="n">6</span><span class="o">]</span> <span class="o">,</span> udWidth<span class="o">:</span><span class="o">=</span> <span class="n">5</span><span class="o">,</span> lrEncoderValueFiltered<span class="o">=</span><span class="o">&gt;</span>Qnd<span class="o">[</span><span class="n">6</span><span class="o">]</span>  <span class="o">,</span> Filter_Error <span class="o">=</span><span class="o">&gt;</span> <span class="o">)</span><span class="o">;</span></span></div>
<div class="cl"><span class="ln">36</span><span class="ct"></span></div>
</div>
<div class="abs fb" style="left:295px;top:323px"></div>
<div class="abs" style="left:1687px;top:320px;width:16px;height:624px;background:#f0f0f0"></div>
<div class="abs" style="left:1687px;top:337px;width:15px;height:208px;background:#cdcdcd"></div>
<svg class="ic" style="left:1690px;top:325px" width="9" height="7"><path d="M1.200 6.400l3.300-4.200 3.300 4.200" stroke="#555" stroke-width="2.100" fill="none"/></svg>
<svg class="ic" style="left:1690px;top:936px" width="9" height="7"><path d="M1.200 .6l3.300 4.200 3.300-4.200" stroke="#555" stroke-width="2.100" fill="none"/></svg>
<div class="abs zb" style="left:1619px;top:928px;width:47px;font-size:11px;line-height:18px;text-align:center;letter-spacing:-.3px">100 %</div><div class="abs zb" style="left:1667px;top:928px;width:19px"></div><svg class="ic" style="left:1668px;top:929px" width="18" height="18"><use href="#mag"/></svg>
<div class="abs" style="left:1708px;top:19px;width:17px;height:24px;background:#c2cedc;border-top:1px solid #999;border-left:1px solid #9aa3ad;border-bottom:1px solid #777"></div>
<div class="abs" style="left:1708px;top:43px;width:1px;height:881px;background:#8c93a5"></div>
<div class="abs" style="left:1708px;top:923px;width:17px;height:1px;background:#8c93a5"></div>
<svg class="ic" style="left:1713px;top:25px" width="12" height="13"><path d="M1.500 1.500h9M6.500 1.500v10M.5 11.500h12" stroke="#000" stroke-width="1" fill="none"/></svg>
<div class="abs" style="left:1708px;top:926px;width:1px;height:18px;background:#a0a0a0"></div>
<svg class="ic" style="left:1710px;top:926px" width="15" height="18" viewBox="0 0 15 18" fill="none"><path d="M5.500 9.500l7 7" stroke="#8a8a8a" stroke-width="2"/><path d="M5.500 9.500l7 7" stroke="#fff" stroke-width=".9" stroke-dasharray="1 1"/><path d="M1.500 7v2h4v-4" stroke="#444" stroke-width="1.300"/><path d="M11 8l-8.500 8.500" stroke="#3a3a3a" stroke-width="2"/><path d="M11 8l-8.500 8.500" stroke="#e03030" stroke-width="1.200" stroke-dasharray="1.200 .8"/><path d="M7.500 3.500l7.500 6.500" stroke="#4a4a20" stroke-width="3.600"/><path d="M8 4l7 6" stroke="#a8a428" stroke-width="2.200"/></svg>
</body></html>
